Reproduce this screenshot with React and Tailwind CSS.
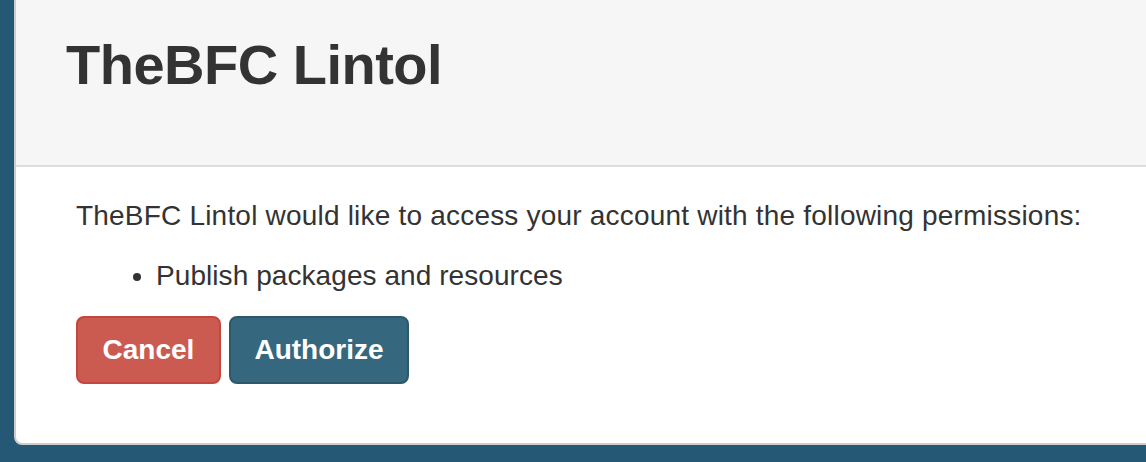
export default function App() {
  return (
    <div
      className="h-[462px] w-full overflow-hidden bg-[#245875] pl-[14px] text-[#333]"
      style={{ fontFamily: '"Liberation Sans", Arial, sans-serif' }}
    >
      {/* panel, top edge sits above the viewport */}
      <div className="-mt-[10px] -mr-[40px] overflow-hidden rounded-[8px] border-2 border-[#cdcdcd] bg-white">
        <div className="h-[175px] border-b-2 border-[#dddddd] bg-[#f6f6f6] pl-[50px] pt-[42px]">
          <h1 className="text-[56px] font-bold leading-[1.1] tracking-[-0.5px]">TheBFC Lintol</h1>
        </div>

        <div className="pl-[60px] pt-[29px] pb-[59px] text-[28px] leading-[40px]">
          <p className="mb-[20px] tracking-[0.2px]">
            TheBFC Lintol would like to access your account with the following permissions:
          </p>
          <ul className="mb-[20px] list-disc pl-[80px] tracking-[0.07px]">
            <li>Publish packages and resources</li>
          </ul>
          <div className="flex gap-[8px]">
            <button className="w-[145px] rounded-[8px] border-2 border-[#c4463c] bg-[#cb5b51] py-[12px] font-bold text-white">
              Cancel
            </button>
            <button className="w-[180px] rounded-[8px] border-2 border-[#2c586b] bg-[#35687e] py-[12px] font-bold text-white">
              Authorize
            </button>
          </div>
        </div>
      </div>
    </div>
  );
}
